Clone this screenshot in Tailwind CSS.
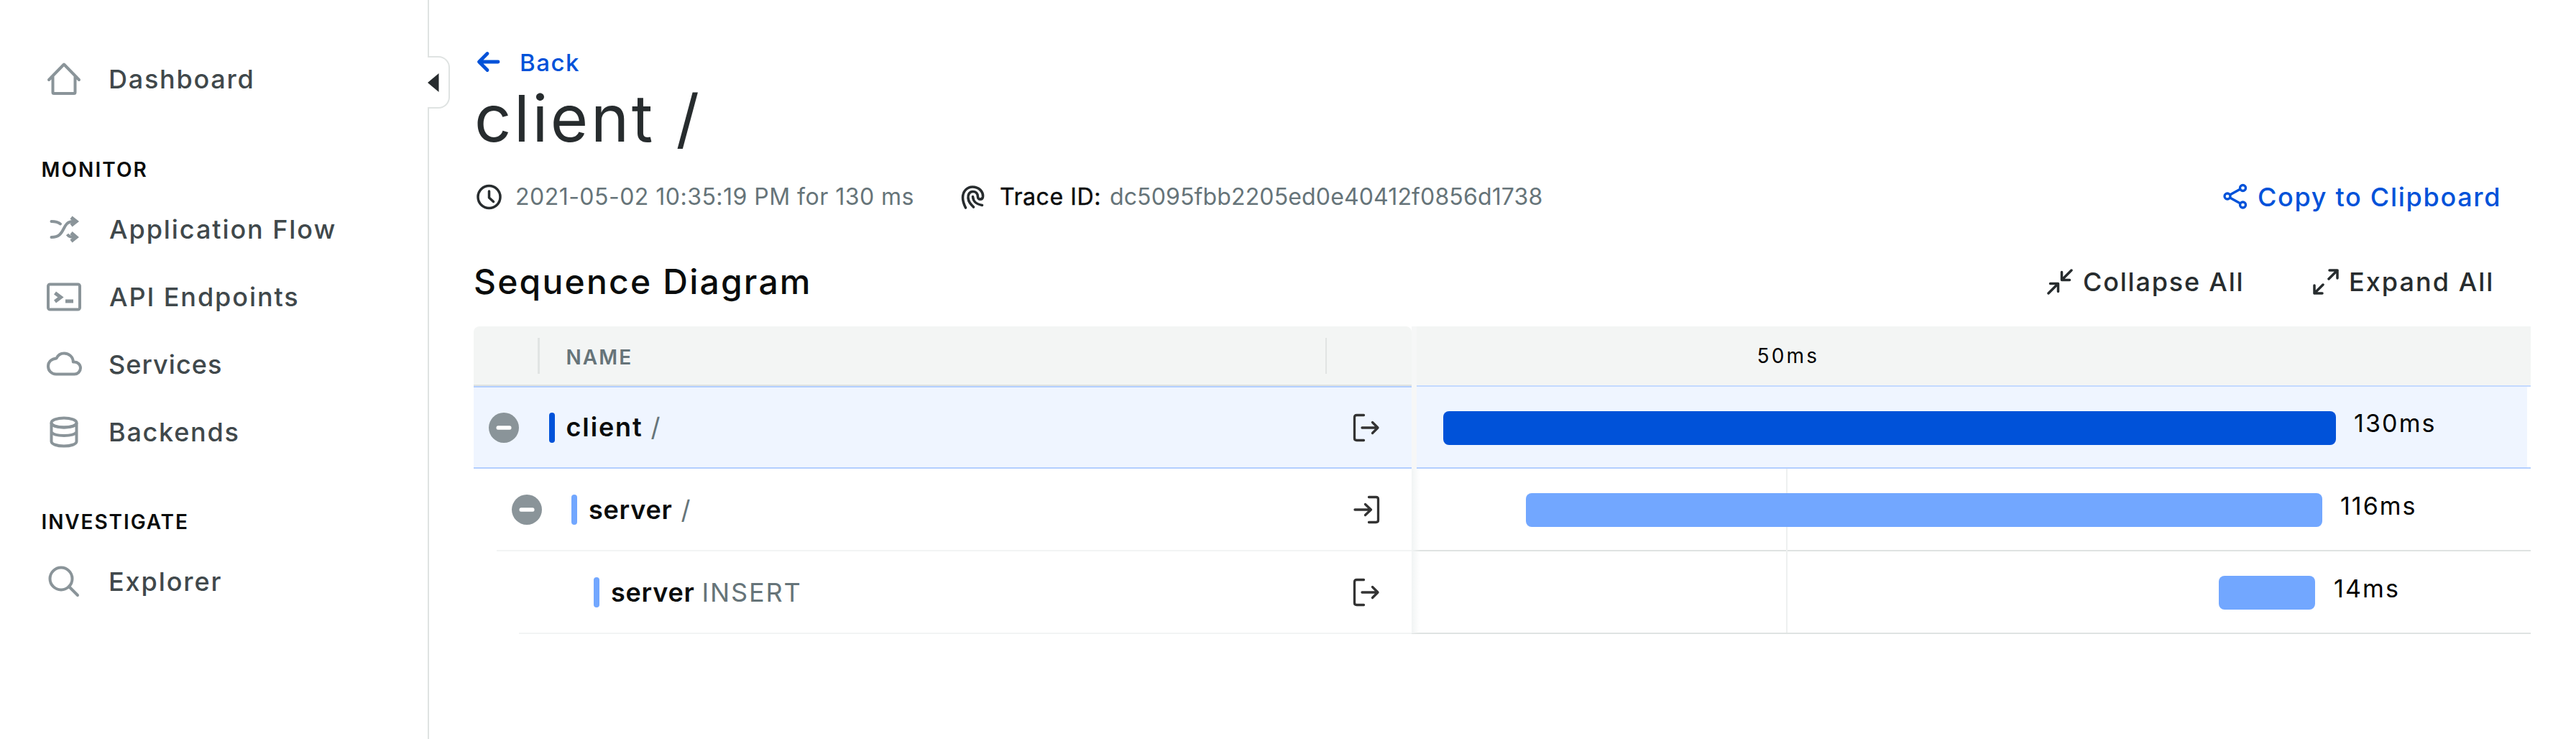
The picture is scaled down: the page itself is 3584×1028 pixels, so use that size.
<!DOCTYPE html>
<html lang="en">
<head>
<meta charset="utf-8">
<title>Trace: client /</title>
<script src="https://cdn.jsdelivr.net/npm/@tailwindcss/browser@4"></script>
</head>
<body class="flex h-[1028px] overflow-hidden bg-white font-['Inter',sans-serif] leading-none whitespace-nowrap text-[#0a0c0c]">

<!-- Sidebar -->
<aside class="relative w-[597px] shrink-0 border-r-2 border-[#dfe3e2] pt-[63px] text-[36px] font-medium text-[#40484b]">
  <a class="flex h-[94px] items-center gap-9 pl-[62px]">
    <svg class="size-[54px] text-[#8a9499]" viewBox="0 0 54 54" fill="none" stroke="currentColor" stroke-width="4" stroke-linecap="round" stroke-linejoin="round"><path d="M6 28 27 6.500 48 28M11.500 23v22.500q0 1.500 1.500 1.500h28q1.500 0 1.500-1.500V23"/></svg>
    <span class="-ml-px tracking-[1.75px]">Dashboard</span>
  </a>
  <h2 class="flex h-[115px] items-center pt-[42px] pl-[57.500px] text-[28px] font-semibold tracking-[2.09px] text-[#0a0c0c]">MONITOR</h2>
  <a class="flex h-[94px] items-center gap-9 pl-[62px]">
    <svg class="size-[54px] text-[#8a9499]" viewBox="0 0 54 54" fill="none" stroke="currentColor" stroke-width="4"><path stroke-linecap="round" d="M9.500 16c6 0 9 .5 12.500 3.500M9.500 38c21 0 13.500-22 30-22H44"/><path d="M31.500 34c2.500 3.500 5.500 4 12.500 4"/><path stroke-width="5" d="m37 10.500 7 5.500-7 5.500M37 32l7 6-7 5.500"/></svg>
    <span class="tracking-[1.93px]">Application Flow</span>
  </a>
  <a class="flex h-[94px] items-center gap-9 pl-[62px]">
    <svg class="size-[54px] text-[#8a9499]" viewBox="0 0 54 54" fill="none" stroke="currentColor" stroke-width="4"><rect x="5" y="9.500" width="44" height="35" rx="2.500"/><path stroke-width="5" d="m14.500 21.500 8 6-8 6M29 33h11"/></svg>
    <span class="tracking-[1.92px]">API Endpoints</span>
  </a>
  <a class="flex h-[94px] items-center gap-9 pl-[62px]">
    <svg class="size-[54px] text-[#8a9499]" viewBox="0 0 54 54" fill="none" stroke="currentColor" stroke-width="4" stroke-linejoin="round"><path d="M16 40.500h25.500a7.800 7.800 0 0 0 0-17H39.800C39.800 16.500 34 11.500 27.200 11.500c-5 0-8.700 2.600-10.700 7C9.500 19 5 23.500 5 29.500c0 6.500 5 11 11 11Z"/></svg>
    <span class="-ml-px tracking-[1.06px]">Services</span>
  </a>
  <a class="flex h-[94px] items-center gap-9 pl-[62px]">
    <svg class="size-[54px] text-[#8a9499]" viewBox="0 0 54 54" fill="none" stroke="currentColor" stroke-width="4"><ellipse cx="27" cy="14" rx="17.500" ry="6.500"/><path d="M9.500 14v26c0 4 8 6.500 17.500 6.500s17.500-2.500 17.500-6.500V14M9.500 27c2 3 9 5 17.500 5s15.500-2 17.500-5M9.500 16c2 3 9 4.500 17.500 4.500S42.500 19 44.500 16"/></svg>
    <span class="-ml-px tracking-[1.75px]">Backends</span>
  </a>
  <h2 class="flex h-[114px] items-center pt-[41px] pl-[57.500px] text-[28px] font-semibold tracking-[1.91px] text-[#0a0c0c]">INVESTIGATE</h2>
  <a class="flex h-[94px] items-center gap-9 pl-[62px]">
    <svg class="size-[54px] text-[#8a9499]" viewBox="0 0 54 54" fill="none" stroke="currentColor" stroke-width="4" stroke-linecap="round"><circle cx="23" cy="23" r="15.500"/><path d="m34 34 12 12"/></svg>
    <span class="-ml-px tracking-[1.9px]">Explorer</span>
  </a>
  <!-- Collapse handle, sits over the border -->
  <button class="absolute top-[78px] left-[595px] flex h-[73px] w-[31px] items-center rounded-r-2xl border-2 border-l-0 border-[#dfe3e2] bg-white" aria-label="Collapse">
    <svg class="h-[28px] w-[16px]" viewBox="0 0 16 28"><path d="M15.500 1v26L0 14z" fill="#272c2e"/></svg>
  </button>
</aside>

<main class="flex-1 pt-[67px] pr-[63px] pl-[62px]">
  <a class="flex h-10 items-center font-medium text-[#0052d9]">
    <svg class="-mt-[2px] h-[30px] w-[42px]" viewBox="0 0 42 30" fill="none" stroke="currentColor" stroke-width="4.800" stroke-linecap="round" stroke-linejoin="round"><path d="M34 15H8M19 3.500 7.500 15 19 26.500"/></svg>
    <span class="ml-[22px] text-[33px] tracking-[1.51px]">Back</span>
  </a>
  <h1 class="mt-[18px] ml-[1px] flex h-20 items-center text-[90px] tracking-[3.6px] text-[#272c2e]">client /</h1>

  <div class="mt-12 flex h-10 items-center text-[32px] text-[#667479]">
    <svg class="ml-[3px] size-[37px] text-[#272c2e]" viewBox="0 0 37 37" fill="none" stroke="currentColor" stroke-width="3.500" stroke-linecap="round" stroke-linejoin="round"><circle cx="18.500" cy="19" r="15.500"/><path d="M18.500 11v9l6 5.500"/></svg>
    <span class="mt-[2px] ml-[18px] tracking-[0.48px]">2021-05-02 10:35:19 PM for 130 ms</span>
    <svg class="ml-[61px] size-[40px] text-[#272c2e]" viewBox="0 0 40 40" fill="none" stroke="currentColor" stroke-width="3.600" stroke-linecap="round" stroke-linejoin="round"><path d="M10.500 36C7.500 30 6.500 26.500 6.500 22 6.500 13 12.500 7 20 7c9 0 15 6.500 14.500 13.500-.5 5-7 4.500-7 .5 0-5-3-7.500-7-7.500-4.500 0-7 4-6.500 9 .5 5.500 3.500 8.500 7.500 12.500M20.500 20.500c.5 7.500 5 10.500 13 12"/></svg>
    <span class="mt-[2px] ml-[18px] w-[137px] tracking-[0.6px] text-[#0a0c0c] [-webkit-text-stroke:0.4px_#0a0c0c]">Trace ID:</span>
    <span class="mt-[2px] ml-[16px] tracking-[0.14px]">dc5095fbb2205ed0e40412f0856d1738</span>
    <button class="mr-[43px] ml-auto flex items-center text-[36px] font-medium text-[#0052d9]">
      <svg class="size-[36px]" viewBox="0 0 36 36" fill="none" stroke="currentColor" stroke-width="3.300"><circle cx="7" cy="18" r="4"/><circle cx="28.500" cy="6.500" r="4"/><circle cx="28.500" cy="30" r="4"/><path d="m10.500 16 14.500-8M10.500 20 25 28"/></svg>
      <span class="mt-[1px] ml-[13px] w-[337px] text-left tracking-[1.7px]">Copy to Clipboard</span>
    </button>
  </div>

  <div class="mt-[69px] flex h-[60px] items-center">
    <h2 class="text-[48px] font-medium tracking-[2.2px]">Sequence Diagram</h2>
    <button class="ml-auto flex items-center text-[36px] font-medium text-[#272c2e]">
      <svg class="size-[36px]" viewBox="0 0 36 36" fill="none" stroke="currentColor" stroke-width="3.500" stroke-linecap="round" stroke-linejoin="round"><path d="M2 34 15 21M4.500 20.500H15.500V31.500M34 2 21 15M20.500 4.500V15.500H31.500"/></svg>
      <span class="ml-[14px] w-[223px] text-left tracking-[1.8px]">Collapse All</span>
    </button>
    <button class="mr-[53px] ml-[97px] flex items-center text-[36px] font-medium text-[#272c2e]">
      <svg class="size-[36px]" viewBox="0 0 36 36" fill="none" stroke="currentColor" stroke-width="3.500" stroke-linecap="round" stroke-linejoin="round"><path d="M22 14 34 2M23 2H34V13M14 22 2 34M2 23V34H13"/></svg>
      <span class="ml-[14px] w-[200px] text-left tracking-[2.05px]">Expand All</span>
    </button>
  </div>

  <div class="mt-8 flex">
    <!-- Span tree -->
    <section class="w-[1305px] shrink-0">
      <div class="flex h-[83px] items-center rounded-t-lg border-b-2 border-[#dfe2e1] bg-[#f3f5f4] text-[28px] font-semibold text-[#667479]">
        <div class="mt-[1px] ml-[89px] h-[50px] w-[3px] bg-[#e1e4e3]"></div>
        <span class="mt-[4px] ml-[36.500px] tracking-[2.1px]">NAME</span>
        <div class="mt-[1px] mr-[118px] ml-auto h-[50px] w-[2px] bg-[#e1e4e3]"></div>
      </div>
      <div class="flex h-[115px] items-center border-y-2 border-[#b3cfff] bg-[#eff5ff] text-[36px] text-[#667479]">
        <svg class="ml-[21px] size-[42px]" viewBox="0 0 42 42"><circle cx="21" cy="21" r="21" fill="#8a9499"/><rect x="10.500" y="18.300" width="21" height="5.400" rx="2.500" fill="#fff"/></svg>
        <div class="ml-[42px] h-[42px] w-2 rounded-full bg-[#0052d9]"></div>
        <span class="-mt-[2px] ml-[15.500px] font-semibold tracking-[1.87px] text-[#0a0c0c]">client</span>
        <span class="-mt-[2px] ml-[11px]">/</span>
        <svg class="mr-[43px] ml-auto h-[40px] w-[40px]" viewBox="0 0 40 40" fill="none" stroke="#333" stroke-width="3.300" stroke-linecap="round" stroke-linejoin="round"><path d="M16.500 2.500H6.500Q3.500 2.500 3.500 5.500V34.500Q3.500 37.500 6.500 37.500H16.500M14 20H36M28.500 12.500 36 20 28.500 27.500"/></svg>
      </div>
      <div class="ml-8 flex h-[115px] items-center border-b-2 border-[#f2f4f4] text-[36px] text-[#667479]">
        <svg class="ml-[21px] size-[42px]" viewBox="0 0 42 42"><circle cx="21" cy="21" r="21" fill="#8a9499"/><rect x="10.500" y="18.300" width="21" height="5.400" rx="2.500" fill="#fff"/></svg>
        <div class="ml-[41px] h-[42px] w-2 rounded-full bg-[#72a7ff]"></div>
        <span class="ml-[16px] font-semibold tracking-[0.77px] text-[#0a0c0c]">server</span>
        <span class="ml-[12px]">/</span>
        <svg class="mr-[43px] ml-auto h-[40px] w-[40px]" viewBox="0 0 40 40" fill="none" stroke="#333" stroke-width="3.300" stroke-linecap="round" stroke-linejoin="round"><path d="M23.500 2.500H33.500Q36.500 2.500 36.500 5.500V34.500Q36.500 37.500 33.500 37.500H23.500M4 20H26.500M18.500 12.500 26.500 20 18.500 27.500"/></svg>
      </div>
      <div class="ml-[63px] flex h-[115px] items-center border-b-2 border-[#f2f4f4] text-[36px] text-[#667479]">
        <div class="ml-[104px] h-[42px] w-2 rounded-full bg-[#72a7ff]"></div>
        <span class="ml-[16px] font-semibold tracking-[0.77px] text-[#0a0c0c]">server</span>
        <span class="ml-[10px] tracking-[1.86px]">INSERT</span>
        <svg class="mr-[43px] ml-auto h-[40px] w-[40px]" viewBox="0 0 40 40" fill="none" stroke="#333" stroke-width="3.300" stroke-linecap="round" stroke-linejoin="round"><path d="M16.500 2.500H6.500Q3.500 2.500 3.500 5.500V34.500Q3.500 37.500 6.500 37.500H16.500M14 20H36M28.500 12.500 36 20 28.500 27.500"/></svg>
      </div>
    </section>

    <!-- Timeline -->
    <section class="relative flex-1 text-[34px] text-black">
      <div class="flex h-[82px] items-center bg-[#f3f5f4] text-[28px]"><span class="ml-[480.500px] tracking-[3.2px]">50ms</span></div>
      <div class="h-[116px] border-t-2 border-b-2 border-t-[#c3d9ff] border-b-[#b3cfff]">
        <div class="mr-[5.500px] flex h-[112px] items-start bg-[#eff5ff] pt-[33.500px]">
          <div class="ml-[43.600px] h-[47px] w-[1242px] rounded-lg bg-[#0052d9]"></div>
          <span class="ml-[25.500px] leading-[34px] tracking-[2.1px]">130ms</span>
        </div>
      </div>
      <div class="flex h-[115px] items-start border-b-2 border-[#dfe3e2] pt-[34.300px]">
        <div class="z-10 ml-[158.500px] h-[47px] w-[1108.500px] rounded-lg bg-[#72a7ff]"></div>
        <span class="ml-[25px] pt-px leading-[34px] tracking-[2px]">116ms</span>
      </div>
      <div class="flex h-[115px] items-start border-b-2 border-[#dfe3e2] pt-[34.300px]">
        <div class="ml-[1123px] h-[47px] w-[134px] rounded-lg bg-[#72a7ff]"></div>
        <span class="ml-[26px] pt-px leading-[34px] tracking-[2.14px]">14ms</span>
      </div>
      <!-- 50ms gridline and pane-edge shadow -->
      <div class="absolute top-[198px] left-[521px] h-[228px] w-[2px] bg-[#eef0f0]"></div>
      <div class="absolute top-0 left-0 h-[198px] w-[7px] bg-[#f6f7f7]"></div>
      <div class="absolute top-[198px] left-0 h-[229px] w-[12px] bg-linear-to-r from-[#f1f4f4] to-white/0"></div>
    </section>
  </div>
</main>
</body>
</html>
